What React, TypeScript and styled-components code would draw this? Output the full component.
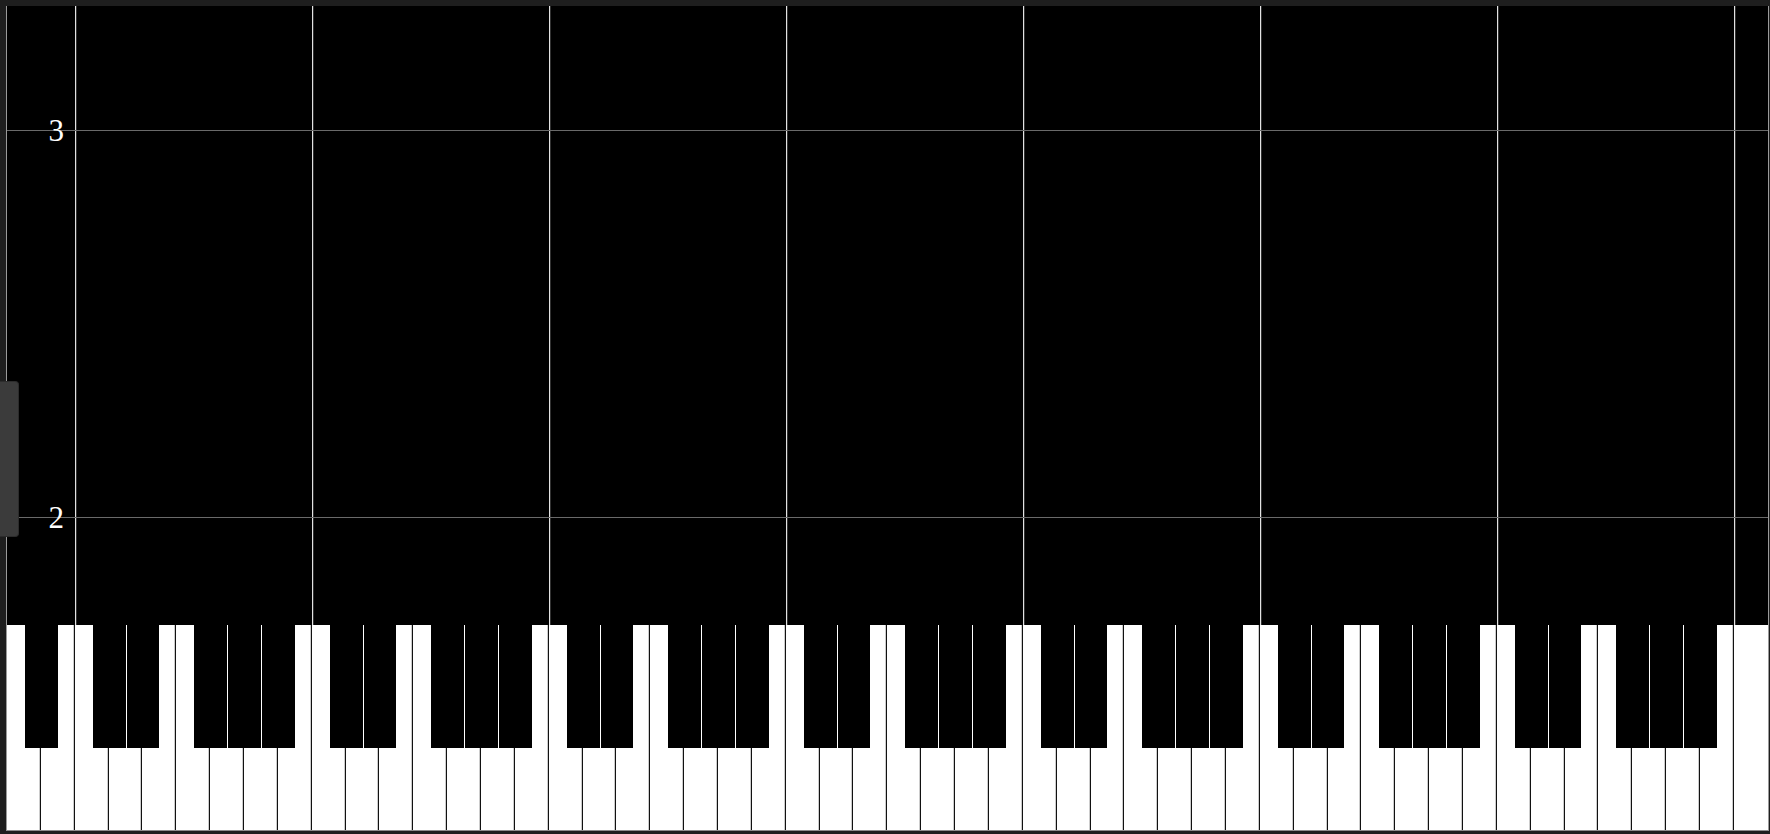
import React from "react";
import styled, { createGlobalStyle } from "styled-components";

const GlobalStyle = createGlobalStyle`
  html, body {
    margin: 0;
    padding: 0;
    background: #1e1e1e;
    overflow: hidden;
  }
  * { box-sizing: border-box; }
`;

const Frame = styled.div`
  position: relative;
  width: 1770px;
  height: 834px;
  padding: 6px 1px 3px 6px;
  background: #1e1e1e;
`;

const Stage = styled.div`
  display: flex;
  flex-direction: column;
  height: 100%;
  background: #000;
  border-left: 1px solid #9a9a9a;
  border-right: 1px solid #9a9a9a;
  border-bottom: 1px solid #8c8c8c;
`;

const Grid = styled.div`
  position: relative;
  display: flex;
  height: 619px;
  flex: 0 0 auto;
`;

const Column = styled.div<{ $span: number; $line: boolean }>`
  flex: ${(p) => p.$span} 1 0;
  min-width: 0;
  box-shadow: ${(p) =>
    p.$line ? "inset 1px 0 0 #e2e2e2, inset 2px 0 0 rgba(200,200,200,0.25)" : "none"};
`;

const HLine = styled.div<{ $top: number }>`
  position: absolute;
  left: 0;
  right: 0;
  top: ${(p) => p.$top}px;
  height: 1px;
  background: #6a6a6a;
`;

const AxisLabel = styled.span`
  position: absolute;
  left: 0;
  width: 57px;
  top: 0;
  transform: translateY(-50%);
  text-align: right;
  font-family: "Liberation Serif", "Times New Roman", serif;
  font-weight: 400;
  font-size: 31px;
  line-height: 1;
  color: #fff;
`;

const Keyboard = styled.div`
  display: flex;
  flex: 1 1 auto;
  background: #fff;
`;

const WhiteKey = styled.div<{ $last: boolean }>`
  position: relative;
  flex: 1 1 0;
  min-width: 0;
  background: #fff;
  box-shadow: ${(p) =>
    p.$last ? "none" : "inset -1px 0 0 #111, inset -2px 0 0 rgba(0,0,0,0.2)"};
`;

const BlackKey = styled.div`
  position: absolute;
  top: 0;
  left: calc(50% + 1px);
  width: calc(100% - 1px);
  height: 123px;
  background: #000;
  z-index: 1;
`;

const Handle = styled.div`
  position: absolute;
  left: 0;
  top: 381px;
  width: 19px;
  height: 156px;
  background: #3b3b3b;
  border: 1px solid #2c2c2c;
  border-left: none;
  border-radius: 0 4px 4px 0;
  z-index: 3;
`;

// A0 .. C8 : 52 white keys
const NOTE_ORDER = ["C", "D", "E", "F", "G", "A", "B"];
const HAS_SHARP = new Set(["C", "D", "F", "G", "A"]);

type Key = { name: string; octave: number };

const whiteKeys: Key[] = [
  { name: "A", octave: 0 },
  { name: "B", octave: 0 },
];
for (let o = 1; o <= 7; o++) {
  NOTE_ORDER.forEach((n) => whiteKeys.push({ name: n, octave: o }));
}
whiteKeys.push({ name: "C", octave: 8 });

const columns = [
  { span: 2, line: false },
  ...Array.from({ length: 7 }, () => ({ span: 7, line: true })),
  { span: 1, line: true },
];

const rows = [
  { top: 124, label: "3" },
  { top: 511, label: "2" },
];

export default function App() {
  return (
    <>
      <GlobalStyle />
      <Frame>
        <Stage>
          <Grid>
            {columns.map((c, i) => (
              <Column key={i} $span={c.span} $line={c.line} />
            ))}
            {rows.map((r) => (
              <HLine key={r.label} $top={r.top}>
                <AxisLabel>{r.label}</AxisLabel>
              </HLine>
            ))}
          </Grid>
          <Keyboard>
            {whiteKeys.map((k, i) => (
              <WhiteKey key={`${k.name}${k.octave}`} $last={i === whiteKeys.length - 1}>
                {HAS_SHARP.has(k.name) && i !== whiteKeys.length - 1 && <BlackKey />}
              </WhiteKey>
            ))}
          </Keyboard>
        </Stage>
        <Handle />
      </Frame>
    </>
  );
}
